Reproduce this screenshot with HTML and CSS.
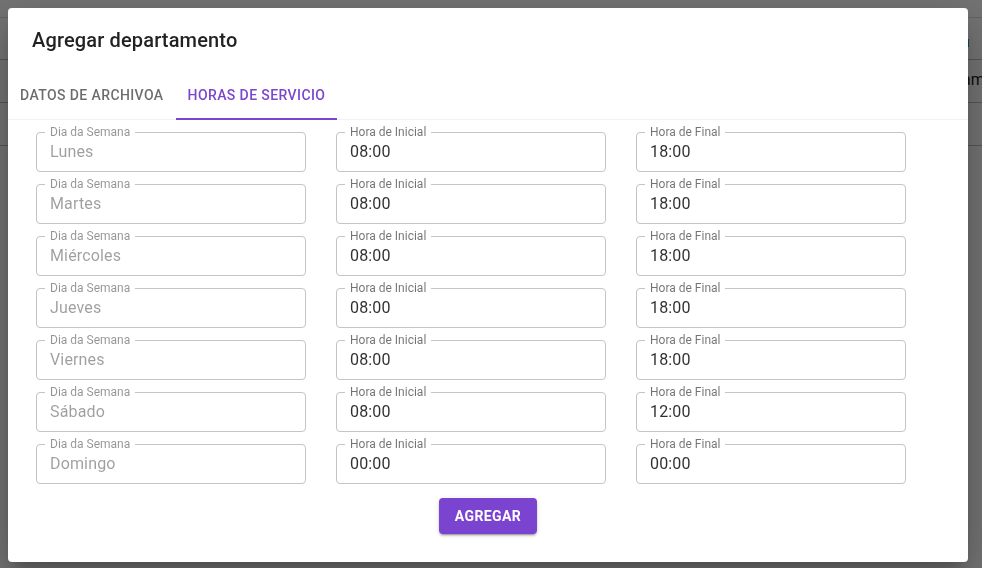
FILE: index.html
```html
<!DOCTYPE html>
<html lang="es">
<head>
<meta charset="utf-8">
<title>Agregar departamento</title>
<link rel="stylesheet" href="styles.css">
</head>
<body>
<div class="page">
  <div class="page-row page-row-top"><span class="blue-mark"></span></div>
  <div class="page-row"><span class="page-text">am</span></div>
  <div class="page-row"></div>
</div>
<div class="backdrop"></div>
<div class="dialog">
  <h2 class="dialog-title">Agregar departamento</h2>
  <div class="tabs">
    <div class="tab">Datos de archivoa</div>
    <div class="tab tab-active">Horas de servicio</div>
  </div>
  <div class="dialog-content">
    <div class="grid">
      <div class="field disabled"><span class="label">Dia da Semana</span><div class="value">Lunes</div></div>
      <div class="field"><span class="label">Hora de Inicial</span><div class="value">08:00</div></div>
      <div class="field"><span class="label">Hora de Final</span><div class="value">18:00</div></div>

      <div class="field disabled"><span class="label">Dia da Semana</span><div class="value">Martes</div></div>
      <div class="field"><span class="label">Hora de Inicial</span><div class="value">08:00</div></div>
      <div class="field"><span class="label">Hora de Final</span><div class="value">18:00</div></div>

      <div class="field disabled"><span class="label">Dia da Semana</span><div class="value">Miércoles</div></div>
      <div class="field"><span class="label">Hora de Inicial</span><div class="value">08:00</div></div>
      <div class="field"><span class="label">Hora de Final</span><div class="value">18:00</div></div>

      <div class="field disabled"><span class="label">Dia da Semana</span><div class="value">Jueves</div></div>
      <div class="field"><span class="label">Hora de Inicial</span><div class="value">08:00</div></div>
      <div class="field"><span class="label">Hora de Final</span><div class="value">18:00</div></div>

      <div class="field disabled"><span class="label">Dia da Semana</span><div class="value">Viernes</div></div>
      <div class="field"><span class="label">Hora de Inicial</span><div class="value">08:00</div></div>
      <div class="field"><span class="label">Hora de Final</span><div class="value">18:00</div></div>

      <div class="field disabled"><span class="label">Dia da Semana</span><div class="value">Sábado</div></div>
      <div class="field"><span class="label">Hora de Inicial</span><div class="value">08:00</div></div>
      <div class="field"><span class="label">Hora de Final</span><div class="value">12:00</div></div>

      <div class="field disabled"><span class="label">Dia da Semana</span><div class="value">Domingo</div></div>
      <div class="field"><span class="label">Hora de Inicial</span><div class="value">00:00</div></div>
      <div class="field"><span class="label">Hora de Final</span><div class="value">00:00</div></div>
    </div>
    <div class="actions">
      <button class="btn" type="button">Agregar</button>
    </div>
  </div>
</div>
</body>
</html>
```
FILE: styles.css
```css
* { box-sizing: border-box; }
html, body { margin: 0; padding: 0; }
body {
  width: 982px;
  height: 568px;
  overflow: hidden;
  background: #ffffff;
  font-family: Roboto, "Liberation Sans", Arial, sans-serif;
}

/* background app, dimmed by backdrop */
.page {
  padding-top: 17px;
}
.page-row {
  height: 43px;
  border-bottom: 1px solid #bdbdbd;
  position: relative;
}
.page-row-top { border-top: 1px solid #dcdcdc; }
.blue-mark {
  position: absolute;
  left: 966px;
  top: 21px;
  width: 3px;
  height: 8px;
  background: #1e9fd0;
}
.page-text {
  position: absolute;
  left: 962px;
  top: 10px;
  font-size: 16px;
  color: #2a1a0a;
  white-space: nowrap;
}

.backdrop {
  position: fixed;
  inset: 0;
  background: rgba(0, 0, 0, 0.55);
}

.dialog {
  position: fixed;
  top: 8px;
  left: 8px;
  width: 960px;
  height: 554px;
  background: #fff;
  border-radius: 4px;
  box-shadow: 0 11px 15px -7px rgba(0,0,0,0.2), 0 24px 38px 3px rgba(0,0,0,0.14), 0 9px 46px 8px rgba(0,0,0,0.12);
  display: flex;
  flex-direction: column;
}

.dialog-title {
  margin: 0;
  padding: 16px 24px;
  font-size: 20px;
  line-height: 32px;
  font-weight: 500;
  letter-spacing: 0.15px;
  color: rgba(0,0,0,0.87);
}

.tabs {
  display: flex;
  height: 48px;
  border-bottom: 1px solid #f2f2f2;
}
.tab {
  padding: 0 12px;
  height: 48px;
  line-height: 46px;
  font-size: 14px;
  font-weight: 500;
  letter-spacing: 0.4px;
  text-transform: uppercase;
  color: rgba(0,0,0,0.58);
  border-bottom: 2px solid transparent;
}
.tab-active {
  color: #7b45d0;
  border-bottom-color: #7b45d0;
}

.dialog-content {
  padding: 12px 0 0 28px;
}

.grid {
  display: grid;
  grid-template-columns: 270px 270px 270px;
  column-gap: 30px;
  row-gap: 12px;
}

.field {
  position: relative;
  height: 40px;
  border: 1px solid #c4c4c4;
  border-radius: 4px;
}
.label {
  position: absolute;
  top: -8px;
  left: 8px;
  padding: 0 5px;
  background: #fff;
  font-size: 12px;
  line-height: 14px;
  color: rgba(0,0,0,0.55);
  white-space: nowrap;
}
.value {
  padding: 0 13px;
  line-height: 38px;
  font-size: 16px;
  color: rgba(0,0,0,0.82);
  letter-spacing: 0.15px;
}
.field.disabled .label { color: rgba(0,0,0,0.42); }
.field.disabled .value { color: rgba(0,0,0,0.38); }

.actions {
  display: flex;
  justify-content: center;
  padding-right: 28px;
  margin-top: 14px;
}
.btn {
  width: 98px;
  height: 36px;
  border: none;
  border-radius: 4px;
  background: #7b44d0;
  color: #fff;
  font-family: Roboto, "Liberation Sans", Arial, sans-serif;
  font-size: 14px;
  font-weight: 700;
  letter-spacing: 0.4px;
  text-transform: uppercase;
  box-shadow: 0 3px 1px -2px rgba(0,0,0,0.2), 0 2px 2px 0 rgba(0,0,0,0.14), 0 1px 5px 0 rgba(0,0,0,0.12);
  padding: 0;
}
```
